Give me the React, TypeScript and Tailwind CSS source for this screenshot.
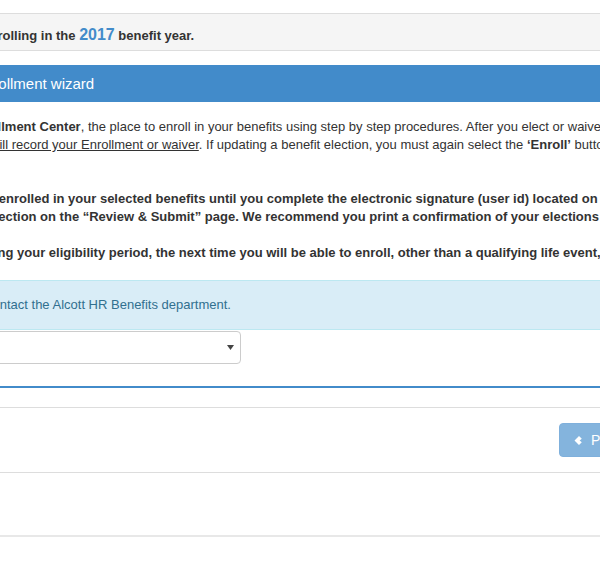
import React from "react";

export default function App() {
  return (
    <div className="h-[564px] w-[600px] overflow-hidden bg-white font-['Liberation_Sans',Arial,sans-serif] text-[13px] text-[#333]">
      <div className="h-[13px]" />
      <div className="border-y border-[#ddd] bg-[#f5f5f5] pt-[12px] pb-[4px] font-bold leading-[20px] whitespace-nowrap">
        <div className="-ml-[68px]">
          You are enrolling in the{" "}
          <span className="text-[16px] leading-none text-[#428bca]">2017</span>{" "}
          benefit year.
        </div>
      </div>

      <div className="mt-[14px] bg-[#428bca] pt-[9px] pb-[8px] text-[15px] leading-[20px] text-white whitespace-nowrap">
        <div className="-ml-[25px]">Enrollment wizard</div>
      </div>

      <div className="mt-[16px] leading-[18px] whitespace-nowrap">
        <div className="-ml-[32px]">
          <b>Enrollment Center</b>, the place to enroll in your benefits using step by step procedures. After you elect or waive each benefit
        </div>
        <div className="-ml-[10px]">
          <span className="underline">will record your Enrollment or waiver</span>. If updating a benefit election, you must again select the{" "}
          <b>‘Enroll’</b> button for that benefit.
        </div>
        <div className="mt-[36px] -ml-[20px] font-bold">
          be enrolled in your selected benefits until you complete the electronic signature (user id) located on the
        </div>
        <div className="-ml-[9px] font-bold">
          section on the “Review &amp; Submit” page. We recommend you print a confirmation of your elections for your records.
        </div>
        <div className="mt-[18px] -ml-[27px] font-bold">
          during your eligibility period, the next time you will be able to enroll, other than a qualifying life event, will be
        </div>
      </div>

      <div className="mt-[18px] border-y border-[#bce8f1] bg-[#d9edf7] pt-[15px] pb-[15px] leading-[18px] text-[#31708f] whitespace-nowrap">
        <div className="-ml-[14px]">contact the Alcott HR Benefits department.</div>
      </div>

      <div className="mt-[1px] -ml-[10px] flex h-[33px] w-[251px] items-center justify-end rounded-[4px] border border-[#ccc] bg-white pr-[6px]">
        <svg width="7" height="5" viewBox="0 0 7 5">
          <polygon points="0,0 7,0 3.5,5" fill="#444" />
        </svg>
      </div>

      <div className="mt-[22px] h-[2px] bg-[#428bca]" />

      <div className="mt-[19px] border-y border-[#ddd] pt-[15px] pb-[15px]">
        <div className="ml-[559px] flex h-[34px] w-[140px] items-center rounded-[4px] border border-[#7fb0dc] bg-[#84b4dd] pl-[14px] text-[14px] text-white">
          <svg width="9" height="11" viewBox="0 0 9 11" className="mr-[8px]">
            <polygon points="0.5,5.5 5,1 7.8,3.8 5.6,5.5 7.8,7.2 5,10" fill="#fff" />
          </svg>
          <span>Previous</span>
        </div>
      </div>

      <div className="h-[64px] border-b-2 border-[#e8e8e8]" />
    </div>
  );
}
